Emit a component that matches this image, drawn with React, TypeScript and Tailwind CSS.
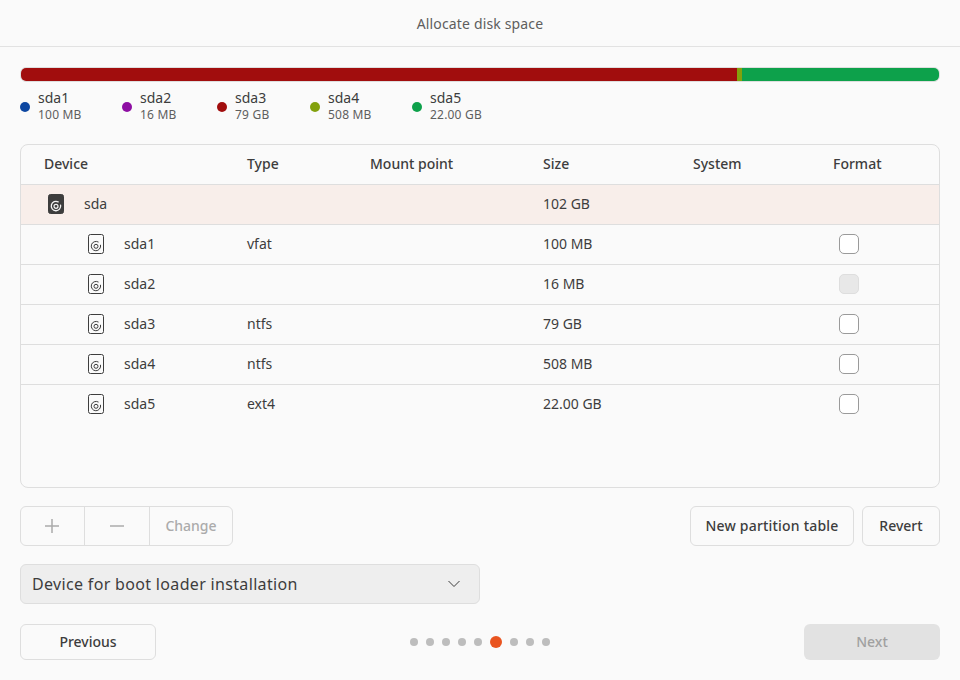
const FONT = "font-['Noto_Sans','Open_Sans',sans-serif]"

const LEGEND = [
  { name: 'sda1', size: '100 MB', dot: 'bg-[#0d47a1]', width: 'w-[102px]' },
  { name: 'sda2', size: '16 MB', dot: 'bg-[#8e0ea3]', width: 'w-[95px]' },
  { name: 'sda3', size: '79 GB', dot: 'bg-[#a10d0d]', width: 'w-[93px]' },
  { name: 'sda4', size: '508 MB', dot: 'bg-[#82a10d]', width: 'w-[102px]' },
  { name: 'sda5', size: '22.00 GB', dot: 'bg-[#0da14b]', width: 'w-[100px]' },
]

const ROWS = [
  { name: 'sda1', type: 'vfat', size: '100 MB', disabled: false },
  { name: 'sda2', type: '', size: '16 MB', disabled: true },
  { name: 'sda3', type: 'ntfs', size: '79 GB', disabled: false },
  { name: 'sda4', type: 'ntfs', size: '508 MB', disabled: false },
  { name: 'sda5', type: 'ext4', size: '22.00 GB', disabled: false },
]

const GRID = 'grid grid-cols-[203px_123px_173px_150px_140px_1fr] items-center pl-[23px] pb-[1px]'
// Noto sits a pixel lower than the reference's font
const CELL = 'pb-[2px]'

function DiskIcon({ dark = false }: { dark?: boolean }) {
  const fg = dark ? '#f2f2f2' : '#3d3d3d'
  return (
    <svg width="16" height="20" viewBox="0 0 16 20" fill="none">
      <rect
        x="0.5"
        y="0.5"
        width="15"
        height="19"
        rx="2"
        fill={dark ? '#3d3d3d' : '#fafafa'}
        stroke="#3d3d3d"
      />
      <path d="M12.6 11.2a4.7 4.7 0 1 1-2.4-3.3" stroke={fg} strokeWidth={dark ? 1.3 : 1} strokeLinecap="round" />
      <circle cx="8" cy="12.3" r="2" stroke={fg} strokeWidth={dark ? 1.2 : 1} />
    </svg>
  )
}

export default function App() {
  return (
    <div className={`${FONT} flex h-[680px] w-[960px] flex-col overflow-hidden bg-[#fafafa] text-[14px] text-[#3d3d3d]`}>
      {/* Title bar */}
      <div className="flex h-[47px] shrink-0 items-center justify-center border-b border-[#e2e2e2] tracking-[0.15px] text-[#5e5e5e]">
        Allocate disk space
      </div>

      <div className="flex flex-1 flex-col px-5 pt-5">
        {/* Usage bar */}
        <div className="flex h-[15px] overflow-hidden rounded-[6px] border border-[#dedede]">
          <div className="w-[716px] bg-[#a10d0d]" />
          <div className="w-[5px] bg-[#82a10d]" />
          <div className="flex-1 bg-[#0da14b]" />
        </div>

        {/* Legend */}
        <div className="mt-[9px] flex h-[32px]">
          {LEGEND.map((l) => (
            <div key={l.name} className={`flex items-center gap-2 ${l.width}`}>
              <span className={`h-[10px] w-[10px] rounded-full ${l.dot}`} />
              <div>
                <div className="mb-[1px] -mt-[1px] text-[14px] leading-[16px]">{l.name}</div>
                <div className="text-[12px] leading-[16px] tracking-[0.2px] text-[#5e5e5e]">{l.size}</div>
              </div>
            </div>
          ))}
        </div>

        {/* Partition table */}
        <div className="mt-[21px] h-[344px] overflow-hidden rounded-[8px] border border-[#dedede]">
          <div className={`${GRID} h-[40px] border-b border-[#dedede] font-medium`}>
            <div className={CELL}>Device</div>
            <div className={CELL}>Type</div>
            <div className={CELL}>Mount point</div>
            <div className={CELL}>Size</div>
            <div className={CELL}>System</div>
            <div className={CELL}>Format</div>
          </div>
          <div className={`${GRID} h-[40px] border-b border-[#dedede] bg-[#f8eeea]`}>
            <div className="flex items-center gap-5 pl-[4px]">
              <DiskIcon dark />
              <span className={CELL}>sda</span>
            </div>
            <div />
            <div />
            <div className={CELL}>102 GB</div>
          </div>
          {ROWS.map((r) => (
            <div key={r.name} className={`${GRID} h-[40px] border-b border-[#dedede] last:border-transparent`}>
              <div className="flex items-center gap-5 pl-[44px]">
                <DiskIcon />
                <span className={CELL}>{r.name}</span>
              </div>
              <div className={CELL}>{r.type}</div>
              <div />
              <div className={CELL}>{r.size}</div>
              <div />
              <div className="pl-[6px]">
                <div
                  className={`h-[20px] w-[20px] rounded-[5px] border ${
                    r.disabled ? 'border-[#dedede] bg-[#e8e8e8]' : 'border-[#9a9a9a] bg-white'
                  }`}
                />
              </div>
            </div>
          ))}
        </div>

        {/* Table actions */}
        <div className="mt-[18px] flex h-[40px] items-stretch justify-between">
          <div className="flex rounded-[6px] border border-[#dedede] text-[#ababab]">
            <div className="flex w-[64px] items-center justify-center border-r border-[#dedede] pr-[1px]">
              <svg width="16" height="16" viewBox="0 0 16 16" stroke="#ababab" strokeWidth="1.5">
                <path d="M8 1v14M1 8h14" />
              </svg>
            </div>
            <div className="flex w-[65px] items-center justify-center border-r border-[#dedede]">
              <svg width="16" height="16" viewBox="0 0 16 16" stroke="#ababab" strokeWidth="1.5">
                <path d="M1 8h14" />
              </svg>
            </div>
            <div className="flex w-[82px] items-center justify-center pb-[2px] font-medium">Change</div>
          </div>
          <div className="flex gap-2">
            <div className="flex w-[164px] items-center justify-center rounded-[6px] border border-[#dedede] pb-[2px] font-medium tracking-[0.2px]">
              New partition table
            </div>
            <div className="flex w-[78px] items-center justify-center rounded-[6px] border border-[#dedede] pb-[2px] font-medium">
              Revert
            </div>
          </div>
        </div>

        {/* Boot loader device */}
        <div className="mt-[18px] flex h-[40px] w-[460px] items-center justify-between rounded-[6px] border border-[#dedede] bg-[#eeeeee] pl-[11px] pr-[19px] text-[16px] tracking-[0.33px]">
          <span>Device for boot loader installation</span>
          <svg width="12" height="8" viewBox="0 0 12 8" fill="none" stroke="#3d3d3d">
            <path d="M0.5 1l5.5 5.5L11.5 1" />
          </svg>
        </div>

        {/* Footer */}
        <div className="mt-[20px] flex h-[36px] items-stretch justify-between">
          <div className="flex w-[136px] items-center justify-center rounded-[6px] border border-[#dedede] pb-[2px] font-medium">
            Previous
          </div>
          <div className="flex items-center gap-[8px]">
            {[0, 1, 2, 3, 4].map((i) => (
              <span key={i} className="h-[8px] w-[8px] rounded-full bg-[#bdbdbd]" />
            ))}
            <span className="h-[12px] w-[12px] rounded-full bg-[#e95420]" />
            {[5, 6, 7].map((i) => (
              <span key={i} className="h-[8px] w-[8px] rounded-full bg-[#bdbdbd]" />
            ))}
          </div>
          <div className="flex w-[136px] items-center justify-center rounded-[6px] bg-[#e2e2e2] pb-[2px] font-medium text-[#a0a0a0]">
            Next
          </div>
        </div>
      </div>
    </div>
  )
}
